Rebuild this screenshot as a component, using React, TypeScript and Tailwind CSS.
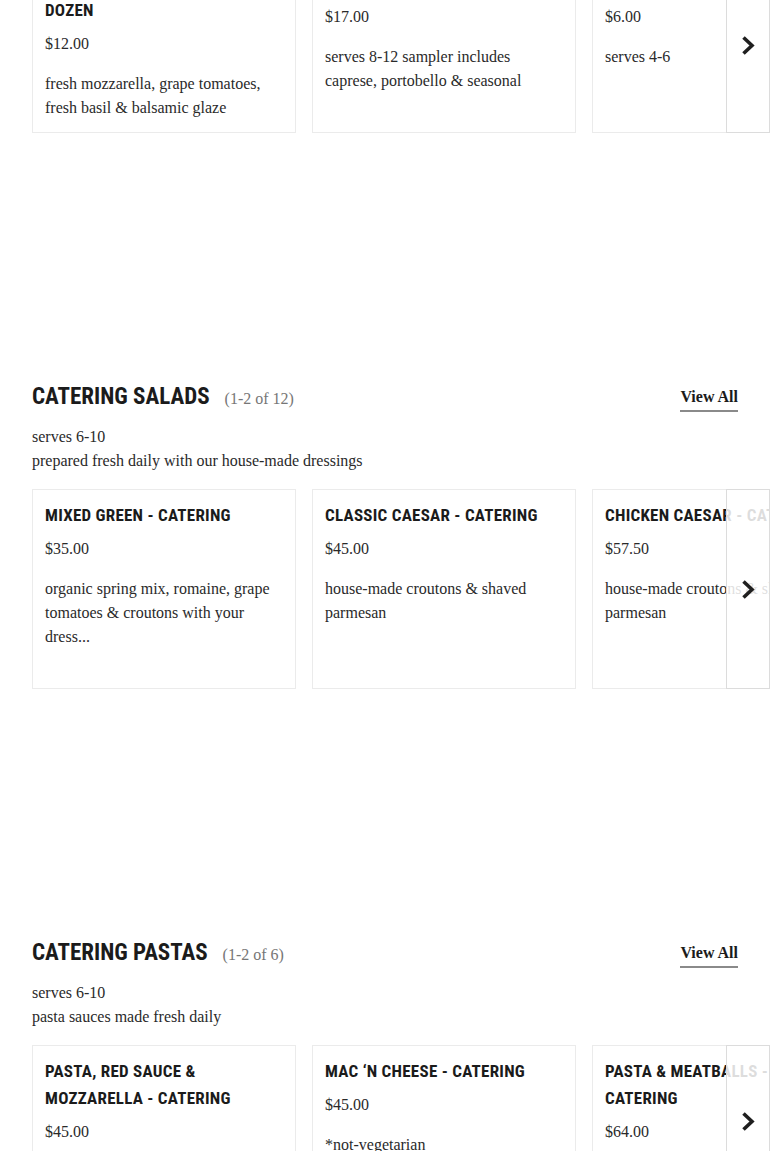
import { ReactNode } from "react";

type Item = {
  name: string;
  price: string;
  desc: string;
};

type Section = {
  title?: string;
  count?: string;
  serves?: string;
  note?: string;
  items: Item[];
  rowH: string;
  arrow: string;
};

const sections: Section[] = [
  {
    items: [
      {
        name: "CAPRESE SKEWERS - ONE\nDOZEN",
        price: "$12.00",
        desc: "fresh mozzarella, grape tomatoes, fresh basil & balsamic glaze",
      },
      {
        name: "CROSTINI SAMPLER",
        price: "$17.00",
        desc: "serves 8-12 sampler includes caprese, portobello & seasonal",
      },
      { name: "GARLIC KNOTS", price: "$6.00", desc: "serves 4-6" },
    ],
    rowH: "h-[176px]",
    arrow: "items-center",
  },
  {
    title: "CATERING SALADS",
    count: "(1-2 of 12)",
    serves: "serves 6-10",
    note: "prepared fresh daily with our house-made dressings",
    items: [
      {
        name: "MIXED GREEN - CATERING",
        price: "$35.00",
        desc: "organic spring mix, romaine, grape tomatoes & croutons with your dress...",
      },
      {
        name: "CLASSIC CAESAR - CATERING",
        price: "$45.00",
        desc: "house-made croutons & shaved parmesan",
      },
      {
        name: "CHICKEN CAESAR - CATERING",
        price: "$57.50",
        desc: "house-made croutons & shaved parmesan",
      },
    ],
    rowH: "h-[200px]",
    arrow: "items-center",
  },
  {
    title: "CATERING PASTAS",
    count: "(1-2 of 6)",
    serves: "serves 6-10",
    note: "pasta sauces made fresh daily",
    items: [
      {
        name: "PASTA, RED SAUCE & MOZZARELLA - CATERING",
        price: "$45.00",
        desc: "house-made marinara with fresh mozzarella",
      },
      {
        name: "MAC \u2018N CHEESE - CATERING",
        price: "$45.00",
        desc: "*not-vegetarian",
      },
      {
        name: "PASTA & MEATBALLS - CATERING",
        price: "$64.00",
        desc: "house-made meatballs & red sauce",
      },
    ],
    rowH: "h-[200px]",
    arrow: "items-start pt-[65px]",
  },
];

const display = "font-['Roboto_Condensed','DejaVu_Sans_Condensed',sans-serif] font-bold";
const serif = "font-['Liberation_Serif','DejaVu_Serif',serif]";

function Chevron() {
  return (
    <svg width="14" height="21" viewBox="0 0 14 21" fill="none">
      <path d="M2.5 2.5 L11 10.5 L2.5 18.5" stroke="#1f1f1f" strokeWidth="3.6" strokeLinejoin="miter" />
    </svg>
  );
}

function Card({ item }: { item: Item }) {
  return (
    <div className="w-[264px] shrink-0 h-full border border-[#ebebeb] bg-white pl-3 pr-5 pt-3">
      <h3 className={`${display} whitespace-pre-line text-[17px] leading-[27px] tracking-[0.015em] text-[#1b1b1b]`}>
        {item.name}
      </h3>
      <p className={`${serif} mt-2 text-[16px] leading-6 text-[#2a2a2a]`}>{item.price}</p>
      <p className={`${serif} mt-4 -mr-2 text-[16px] leading-6 text-[#2a2a2a]`}>{item.desc}</p>
    </div>
  );
}

function Header({ s }: { s: Section }): ReactNode {
  if (!s.title) return null;
  return (
    <div className="pr-8 mt-[248px]">
      <div className="flex items-center justify-between h-8">
        <div className="flex items-baseline gap-[15px]">
          <h2 className={`${display} text-[23px] leading-8 text-[#1b1b1b]`}>{s.title}</h2>
          <span className={`${serif} text-[16px] text-[#767676]`}>{s.count}</span>
        </div>
        <a className={`${serif} font-bold text-[16px] text-[#1b1b1b] leading-6 border-b-2 border-[#8a8a8a] pb-[1px] mt-[2px]`}>
          View All
        </a>
      </div>
      <div className={`${serif} mt-3 text-[16px] leading-[23.5px] text-[#2a2a2a]`}>
        <p>{s.serves}</p>
        <p>{s.note}</p>
      </div>
    </div>
  );
}

export default function App() {
  return (
    <div className="flow-root overflow-hidden bg-white w-[770px] min-h-[1151px]">
      <div className="-mt-[43px] pl-8">
        {sections.map((s, i) => (
          <section key={i}>
            <Header s={s} />
            <div className={`relative overflow-hidden ${s.title ? "mt-[17px]" : ""} ${s.rowH}`}>
              <div className="flex gap-4 h-full">
                {s.items.map((item) => (
                  <Card key={item.name} item={item} />
                ))}
              </div>
              <button
                className={`absolute right-0 top-0 bottom-0 w-[44px] flex justify-center bg-white/85 border border-[#dcdcdc] ${s.arrow}`}
              >
                <Chevron />
              </button>
            </div>
          </section>
        ))}
      </div>
    </div>
  );
}
